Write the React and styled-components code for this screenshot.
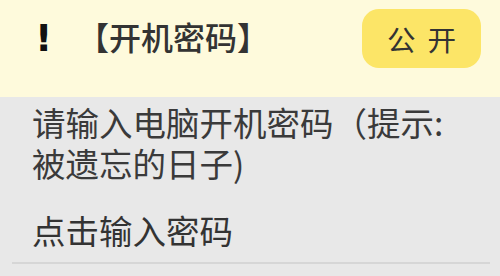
import React from "react";
import styled, { createGlobalStyle } from "styled-components";

const Global = createGlobalStyle`
  html, body {
    margin: 0;
    padding: 0;
    background: #e8e8e8;
  }
  body {
    font-family: "Noto Sans CJK SC", "Noto Sans", sans-serif;
    color: #333;
  }
`;

const Page = styled.div`
  width: 500px;
  height: 276px;
  overflow: hidden;
  background: #e8e8e8;
`;

const Header = styled.div`
  height: 97px;
  background: #fefadc;
  display: flex;
  align-items: center;
  padding: 0 19px 0 35px;
  box-sizing: border-box;
`;

const Bang = styled.span`
  font-family: "DejaVu Sans", sans-serif;
  font-weight: bold;
  font-size: 38px;
  color: #111;
  margin-top: -22px;
  width: 42px;
`;

const Title = styled.div`
  font-size: 32px;
  font-weight: 500;
  color: #333;
  margin-top: -26px;
  flex: 1;
`;

const PublicButton = styled.button`
  width: 119px;
  height: 59px;
  margin-top: -20px;
  border: none;
  border-radius: 17px;
  background: #fce567;
  color: #333;
  font-family: "Noto Sans CJK SC", sans-serif;
  font-size: 28.5px;
  letter-spacing: 12px;
  padding: 0 0 0 12px;
`;

const Body = styled.div`
  padding: 4px 10px 0 12px;
`;

const Prompt = styled.p`
  margin: 0;
  padding: 0 20px;
  font-size: 33.5px;
  line-height: 41px;
  color: #3a3a3a;
`;

const Action = styled.div`
  padding: 27px 20px 12px;
  font-size: 33.5px;
  line-height: 40px;
  color: #333;
  border-bottom: 2px solid #d6d6d6;
`;

export default function App() {
  return (
    <>
      <Global />
      <Page>
        <Header>
          <Bang>!</Bang>
          <Title>【开机密码】</Title>
          <PublicButton>公开</PublicButton>
        </Header>
        <Body>
          <Prompt>请输入电脑开机密码（提示:被遗忘的日子)</Prompt>
          <Action>点击输入密码</Action>
        </Body>
      </Page>
    </>
  );
}
